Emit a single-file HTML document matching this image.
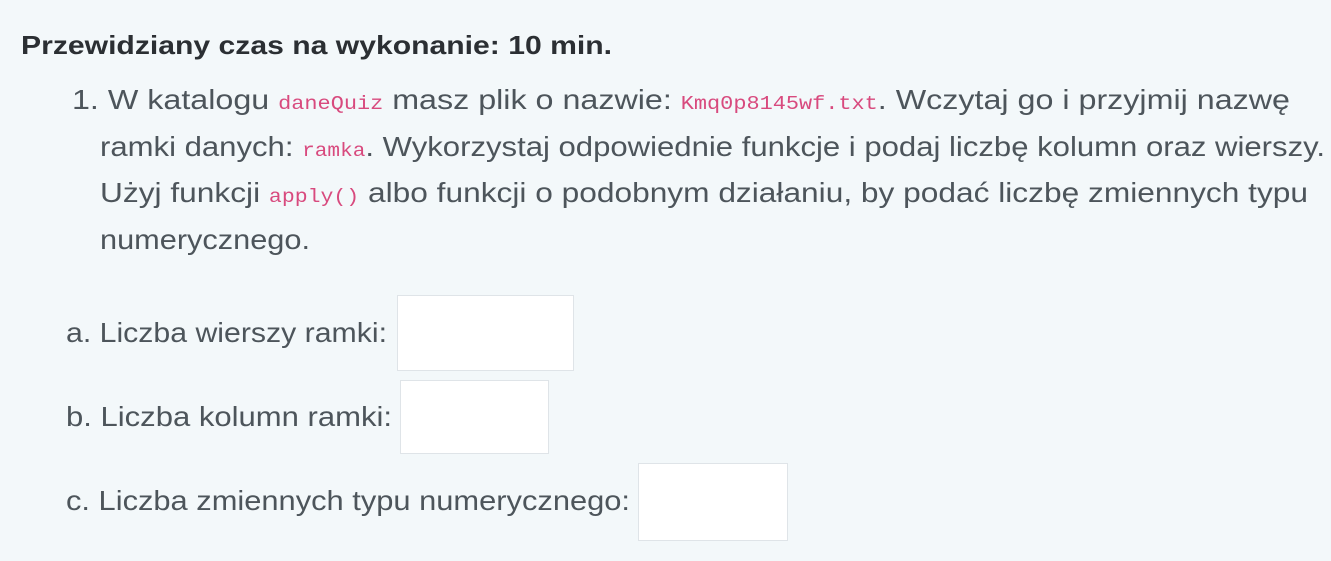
<!DOCTYPE html>
<html><head><meta charset="utf-8"><style>
html,body{margin:0;padding:0}
body{width:1331px;height:561px;background:#f3f8fa;position:relative;overflow:hidden;font-family:"Liberation Sans",sans-serif;color:#4d555b}
.l{position:absolute;white-space:nowrap;font-size:28px;line-height:30px;transform-origin:0 50%}
.h{font-weight:bold;color:#2b2f33;font-size:26px}
code{font-family:"Liberation Mono",monospace;color:#d84a7e;font-size:19px}
.box{position:absolute;background:#fff;border:1px solid #dfe4e8}
</style></head><body>
<div class="l h" id="t0" style="left:21px;top:30px">Przewidziany czas na wykonanie: 10 min.</div>
<div class="l" id="t1" style="left:72px;top:85px">1. W katalogu <code>daneQuiz</code> masz plik o nazwie: <code>Kmq0p8145wf.txt</code>. Wczytaj go i przyjmij nazwę</div>
<div class="l" id="t2" style="left:100px;top:132px">ramki danych: <code>ramka</code>. Wykorzystaj odpowiednie funkcje i podaj liczbę kolumn oraz wierszy.</div>
<div class="l" id="t3" style="left:100px;top:178px">Użyj funkcji <code>apply()</code> albo funkcji o podobnym działaniu, by podać liczbę zmiennych typu</div>
<div class="l" id="t4" style="left:100px;top:225px">numerycznego.</div>
<div class="l" id="t5" style="left:66px;top:318px">a. Liczba wierszy ramki:</div>
<div class="box" style="left:397px;top:295px;width:175px;height:74px"></div>
<div class="l" id="t6" style="left:66px;top:402px">b. Liczba kolumn ramki:</div>
<div class="box" style="left:400px;top:380px;width:147px;height:72px"></div>
<div class="l" id="t7" style="left:66px;top:486px">c. Liczba zmiennych typu numerycznego:</div>
<div class="box" style="left:638px;top:463px;width:148px;height:76px"></div>
<script>
var T={t0:612,t1:1290,t2:1325,t3:1308,t4:310,t5:387,t6:392,t7:630};
for(var k in T){var e=document.getElementById(k);var w=e.getBoundingClientRect().width;var L=parseFloat(e.style.left);e.style.transform='scaleX('+((T[k]-L)/w)+')';}
</script>
</body></html>
